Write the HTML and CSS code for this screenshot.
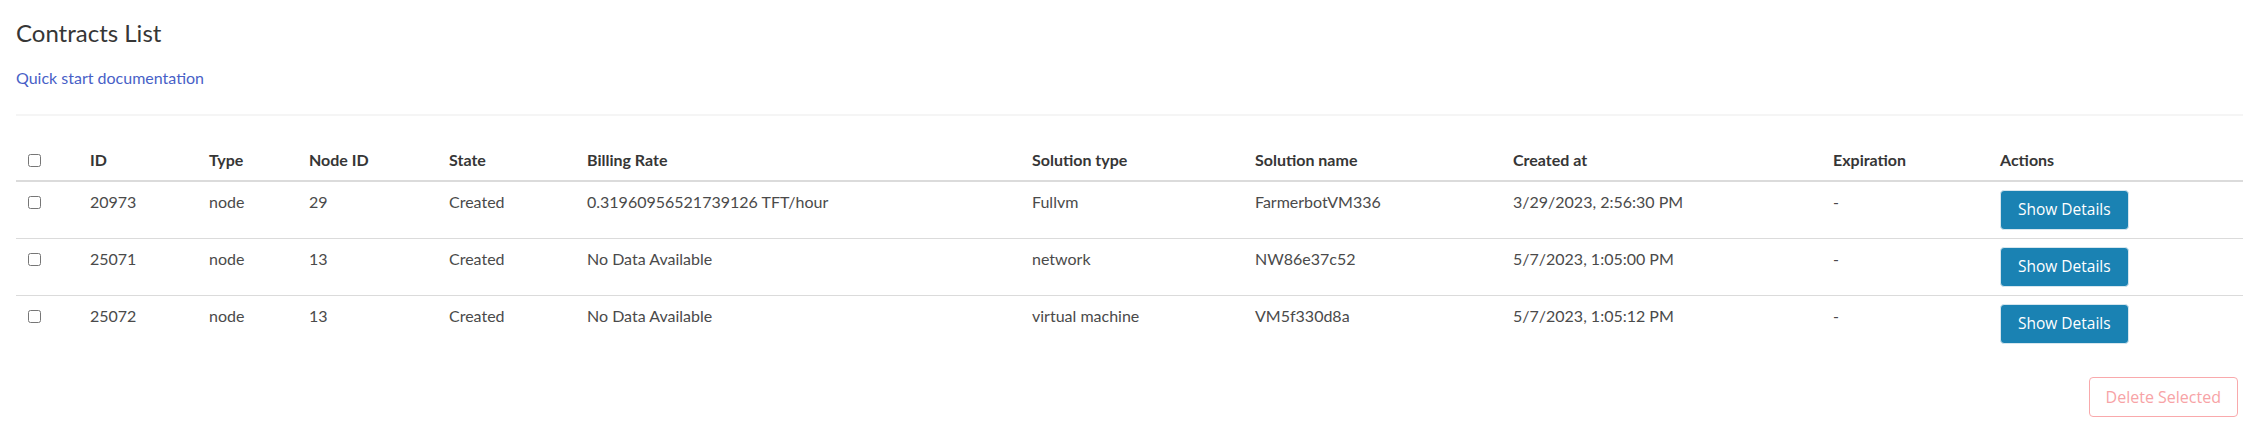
FILE: index.html
```html
<!DOCTYPE html>
<html lang="en">
<head>
<meta charset="utf-8">
<title>Contracts List</title>
<link rel="stylesheet" href="styles.css">
</head>
<body>
<div class="page">
  <h1 class="title">Contracts List</h1>
  <a class="doc-link" href="#">Quick start documentation</a>
  <hr class="divider">
  <table class="contracts">
    <colgroup>
      <col class="c-check"><col class="c-id"><col class="c-type"><col class="c-node"><col class="c-state"><col class="c-billing"><col class="c-soltype"><col class="c-solname"><col class="c-created"><col class="c-exp"><col class="c-actions">
    </colgroup>
    <thead>
      <tr>
        <th><input type="checkbox" class="check"></th>
        <th>ID</th>
        <th>Type</th>
        <th>Node ID</th>
        <th>State</th>
        <th>Billing Rate</th>
        <th>Solution type</th>
        <th>Solution name</th>
        <th>Created at</th>
        <th>Expiration</th>
        <th>Actions</th>
      </tr>
    </thead>
    <tbody>
      <tr>
        <td><input type="checkbox" class="check"></td>
        <td>20973</td>
        <td>node</td>
        <td>29</td>
        <td>Created</td>
        <td>0.31960956521739126 TFT/hour</td>
        <td>Fullvm</td>
        <td>FarmerbotVM336</td>
        <td>3/29/2023, 2:56:30 PM</td>
        <td>-</td>
        <td><button class="btn-details">Show Details</button></td>
      </tr>
      <tr>
        <td><input type="checkbox" class="check"></td>
        <td>25071</td>
        <td>node</td>
        <td>13</td>
        <td>Created</td>
        <td>No Data Available</td>
        <td>network</td>
        <td>NW86e37c52</td>
        <td>5/7/2023, 1:05:00 PM</td>
        <td>-</td>
        <td><button class="btn-details">Show Details</button></td>
      </tr>
      <tr>
        <td><input type="checkbox" class="check"></td>
        <td>25072</td>
        <td>node</td>
        <td>13</td>
        <td>Created</td>
        <td>No Data Available</td>
        <td>virtual machine</td>
        <td>VM5f330d8a</td>
        <td>5/7/2023, 1:05:12 PM</td>
        <td>-</td>
        <td><button class="btn-details">Show Details</button></td>
      </tr>
    </tbody>
  </table>
  <div class="footer-actions">
    <button class="btn-delete" disabled>Delete Selected</button>
  </div>
</div>
</body>
</html>
```

FILE: styles.css
```css
html, body {
  margin: 0;
  padding: 0;
  background: #ffffff;
}

body {
  font-family: Lato, "Liberation Sans", sans-serif;
  font-size: 16px;
  line-height: 1.5;
  color: #4a4a4a;
}

.page {
  padding: 19px 16px 0 16px;
}

.title {
  margin: 0 0 20px 0;
  font-size: 24px;
  font-weight: 400;
  line-height: 27px;
  color: #363636;
}

.doc-link {
  display: block;
  width: max-content;
  color: #485fc7;
  text-decoration: none;
  font-size: 16px;
  line-height: 24px;
}

.divider {
  border: 0;
  height: 2px;
  background: #f5f5f5;
  margin: 24px 0 24px 0;
}

.contracts {
  width: 100%;
  border-collapse: collapse;
  border-spacing: 0;
  table-layout: fixed;
}

.c-check { width: 62px; }
.c-id { width: 119px; }
.c-type { width: 100px; }
.c-node { width: 140px; }
.c-state { width: 138px; }
.c-billing { width: 445px; }
.c-soltype { width: 223px; }
.c-solname { width: 258px; }
.c-created { width: 320px; }
.c-exp { width: 167px; }
.c-actions { width: auto; }

.contracts th,
.contracts td {
  padding: 8px 12px;
  text-align: left;
  vertical-align: top;
  line-height: 24px;
  white-space: nowrap;
}

.contracts th {
  font-weight: 700;
  color: #363636;
  border-bottom: 2px solid #dbdbdb;
}

.contracts td {
  border-bottom: 1px solid #dbdbdb;
  color: #4a4a4a;
}

.contracts tbody tr:last-child td {
  border-bottom: 0;
}

.check {
  margin: 0;
  width: 13px;
  height: 13px;
  vertical-align: -1px;
}

.btn-details {
  font-family: "Open Sans", "Noto Sans", sans-serif;
  font-size: 15.5px;
  height: 40px;
  padding: 0 17px;
  color: #ffffff;
  background: #1a82b3;
  border: 1px solid #d6e6ee;
  border-radius: 4px;
  cursor: pointer;
  line-height: 1;
}

.footer-actions {
  display: flex;
  justify-content: flex-end;
  padding: 25px 5px 0 0;
}

.btn-delete {
  font-family: "Open Sans", "Noto Sans", sans-serif;
  font-size: 16px;
  height: 40px;
  padding: 0 16px;
  color: #f7a3a6;
  background: #ffffff;
  border: 1px solid #f9a9ac;
  border-radius: 4px;
  line-height: 1;
}
```
